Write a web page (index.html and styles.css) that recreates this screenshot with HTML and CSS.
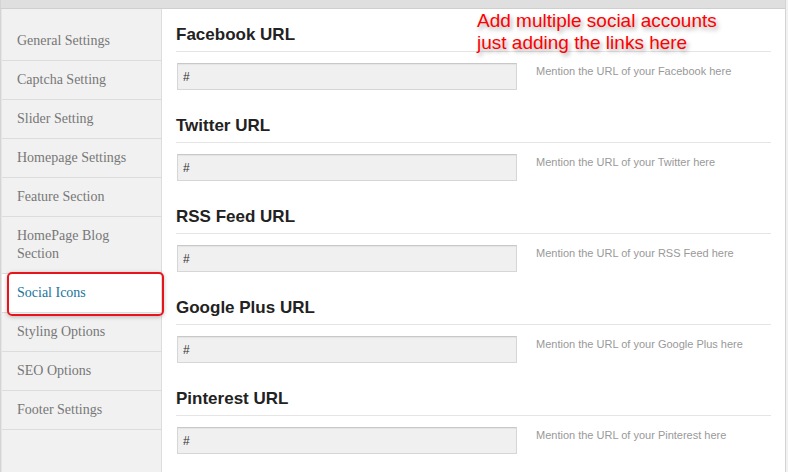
FILE: index.html
```html
<!DOCTYPE html>
<html lang="en">
<head>
    <meta charset="UTF-8">
    <title>Theme Options - Social Icons</title>
    <link rel="stylesheet" href="styles.css">
</head>
<body>
    <div class="wrap">
        <div class="topbar"></div>
        <div class="panel">
            <ul class="nav">
                <li>General Settings</li>
                <li>Captcha Setting</li>
                <li>Slider Setting</li>
                <li>Homepage Settings</li>
                <li>Feature Section</li>
                <li>HomePage Blog<br>Section</li>
                <li class="active">Social Icons</li>
                <li>Styling Options</li>
                <li>SEO Options</li>
                <li>Footer Settings</li>
            </ul>
            <div class="content">
                <div class="section">
                    <h3>Facebook URL</h3>
                    <div class="row">
                        <input type="text" value="#">
                        <span class="desc">Mention the URL of your Facebook here</span>
                    </div>
                </div>
                <div class="section">
                    <h3>Twitter URL</h3>
                    <div class="row">
                        <input type="text" value="#">
                        <span class="desc">Mention the URL of your Twitter here</span>
                    </div>
                </div>
                <div class="section">
                    <h3>RSS Feed URL</h3>
                    <div class="row">
                        <input type="text" value="#">
                        <span class="desc">Mention the URL of your RSS Feed here</span>
                    </div>
                </div>
                <div class="section">
                    <h3>Google Plus URL</h3>
                    <div class="row">
                        <input type="text" value="#">
                        <span class="desc">Mention the URL of your Google Plus here</span>
                    </div>
                </div>
                <div class="section">
                    <h3>Pinterest URL</h3>
                    <div class="row">
                        <input type="text" value="#">
                        <span class="desc">Mention the URL of your Pinterest here</span>
                    </div>
                </div>
            </div>
        </div>
        <div class="note">Add multiple social accounts<br>just adding the links here</div>
    </div>
</body>
</html>
```

FILE: styles.css
```css
body {
    margin: 0;
    background-color: #f1f1f1;
    font-family: "Liberation Sans", Arial, sans-serif;
    overflow: hidden;
}
.wrap {
    position: relative;
    width: 784px;
    height: 472px;
    border-left: 1px solid #d4d4d4;
    border-right: 1px solid #d4d4d4;
    background-color: #fff;
}
.topbar {
    height: 8px;
    background-color: #dfdfdf;
    border-bottom: 1px solid #cfcfcf;
}
.panel {
    display: flex;
    height: 463px;
}
.nav {
    list-style: none;
    margin: 0;
    padding: 13px 0 0 0;
    width: 159px;
    background-color: #f1f1f1;
    border-left: 1px solid #e6e6e6;
    border-right: 1px solid #dcdcdc;
}
.nav li {
    position: relative;
    padding: 10px 10px 10px 15px;
    font-family: "Liberation Serif", "Times New Roman", serif;
    font-size: 14px;
    line-height: 18px;
    color: #777;
    border-bottom: 1px solid #dcdcdc;
}
.nav li.active {
    background-color: #fff;
    color: #21759b;
}
/* red highlight drawn over the active tab */
.nav li.active::after {
    content: "";
    position: absolute;
    top: -2px;
    left: 5px;
    right: -3px;
    bottom: -4px;
    border: 2px solid #e8141b;
    border-radius: 5px;
    box-shadow: 0 1px 4px rgba(0, 0, 0, 0.25);
}
.content {
    flex: 1;
    padding: 16px 14px 0 14px;
    background-color: #fff;
}
.section {
    margin-bottom: 26px;
}
.section h3 {
    margin: 0;
    padding-bottom: 6px;
    font-size: 17px;
    line-height: 20px;
    color: #222;
    border-bottom: 1px solid #e5e5e5;
}
.row {
    display: flex;
    align-items: flex-start;
    margin-top: 11px;
}
.row input {
    box-sizing: border-box;
    width: 340px;
    height: 27px;
    margin: 0 0 0 1px;
    padding: 0 5px;
    font-family: "Liberation Sans", Arial, sans-serif;
    font-size: 12px;
    color: #333;
    background-color: #f0f0f0;
    border: 1px solid #d6d6d6;
    border-top-color: #c8c8c8;
    box-shadow: inset 0 1px 1px rgba(0, 0, 0, 0.05);
}
.desc {
    margin: 1px 0 0 19px;
    font-size: 11px;
    line-height: 14px;
    color: #999;
}
.note {
    position: absolute;
    top: 10px;
    left: 476px;
    font-size: 19px;
    line-height: 22px;
    color: #ff0000;
    text-shadow: 2px 3px 4px rgba(0, 0, 0, 0.35);
}
```
